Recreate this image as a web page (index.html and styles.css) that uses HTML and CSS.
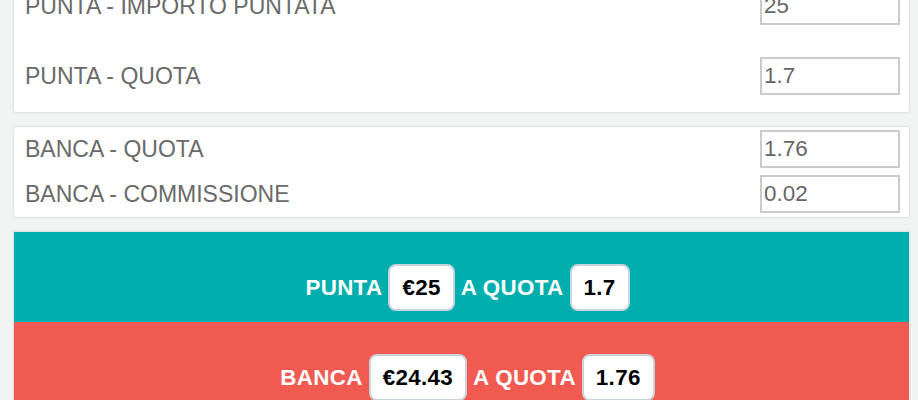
FILE: index.html
```html
<!DOCTYPE html>
<html lang="it">

<head>
    <meta charset="UTF-8">
    <meta name="viewport" content="width=device-width, initial-scale=1.0">
    <link rel="stylesheet" href="styles.css">
</head>

<body>
    <form id="formPunta" class="card card-punta">
        <div class="row">
            <label for="importo">PUNTA - IMPORTO PUNTATA</label>
            <input type="text" name="importo" id="importo" value="25">
        </div>
        <div class="row">
            <label for="quotaPunta">PUNTA - QUOTA</label>
            <input type="text" name="quotaPunta" id="quotaPunta" value="1.7">
        </div>
    </form>

    <form id="formBanca" class="card card-banca">
        <div class="row">
            <label for="quotaBanca">BANCA - QUOTA</label>
            <input type="text" name="quotaBanca" id="quotaBanca" value="1.76">
        </div>
        <div class="row">
            <label for="commissione">BANCA - COMMISSIONE</label>
            <input type="text" name="commissione" id="commissione" value="0.02">
        </div>
    </form>

    <div class="result">
        <div class="bet bet-punta">
            <span>PUNTA</span>
            <span class="pill">€25</span>
            <span>A QUOTA</span>
            <span class="pill">1.7</span>
        </div>
        <div class="bet bet-banca">
            <span>BANCA</span>
            <span class="pill">€24.43</span>
            <span>A QUOTA</span>
            <span class="pill">1.76</span>
        </div>
    </div>
</body>

</html>
```

FILE: styles.css
```css
body {
    margin: 0;
    padding: 0 8px 0 13px;
    background-color: #f2f3f3;
    font-family: "Liberation Sans", Arial, sans-serif;
}

.card {
    background-color: #fff;
    border: 1px solid #e4e6e6;
    box-shadow: 0 0 0 1px #eceeee;
    border-radius: 3px;
    padding: 3px 9px 4px 11px;
    margin: 0 0 13px 0;
    display: flex;
    flex-direction: column;
    gap: 7px;
}

.card-punta {
    margin-top: -17px;
    padding-bottom: 17px;
    gap: 32px;
}

.row {
    display: flex;
    justify-content: space-between;
    align-items: center;
    height: 38px;
}

.row label {
    font-size: 23px;
    color: #6a6a6a;
}

.row input {
    box-sizing: border-box;
    width: 140px;
    height: 38px;
    border: 2px solid #cbcbcb;
    padding: 0 2px;
    font-family: "Liberation Sans", Arial, sans-serif;
    font-size: 22.4px;
    color: #666;
    outline: none;
}

.result {
    border: 1px solid #e4e6e6;
    box-shadow: 0 0 0 1px #eceeee;
}

.bet {
    display: flex;
    justify-content: center;
    align-items: center;
    gap: 6px;
    padding: 32px 0 11px 12px;
    color: #fff;
    font-weight: bold;
    font-size: 22.4px;
    letter-spacing: 0.3px;
}

.bet-punta {
    background-color: #00aeae;
}

.bet-banca {
    background-color: #f15a50;
}

.pill {
    background-color: #fff;
    color: #000;
    border: 2px solid #c9d3dc;
    border-radius: 8px;
    padding: 9px 12px;
    line-height: 25px;
}
```
